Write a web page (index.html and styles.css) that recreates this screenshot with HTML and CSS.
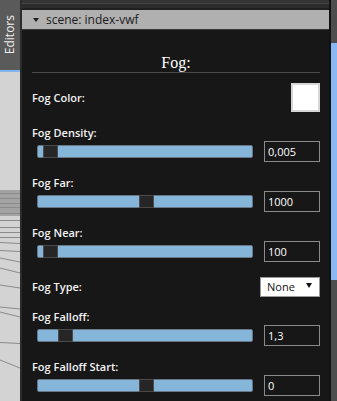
FILE: index.html
```html
<!DOCTYPE html>
<html lang="en">
  <head>
    <meta charset="UTF-8" />
    <meta name="viewport" content="width=device-width, initial-scale=1.0" />
    <title>Scene Editor - Fog</title>
    <link rel="stylesheet" href="styles.css">
  </head>
  <body>
    <div class="app">
      <aside class="side">
        <div class="side-tab"><span>Editors</span></div>
        <div class="scene">
          <svg width="20" height="329" viewBox="0 0 20 329">
            <rect x="0" y="118" width="20" height="26" fill="#a3a3a3" />
            <g stroke="#8a8a8a" stroke-width="1">
              <line x1="0" y1="121.5" x2="20" y2="121.5" />
              <line x1="0" y1="126.5" x2="20" y2="126.5" />
              <line x1="0" y1="131.5" x2="20" y2="131.5" />
              <line x1="0" y1="135.5" x2="20" y2="135.5" />
              <line x1="0" y1="141.5" x2="20" y2="141.5" />
              <line x1="0" y1="148.5" x2="20" y2="148.5" />
              <line x1="0" y1="155.5" x2="20" y2="155.5" />
              <line x1="0" y1="160.5" x2="20" y2="160.5" />
              <line x1="0" y1="165.5" x2="20" y2="165.5" />
              <line x1="0" y1="170.5" x2="20" y2="171.5" />
              <line x1="0" y1="178.5" x2="20" y2="179.5" />
              <line x1="0" y1="186" x2="20" y2="190" />
              <line x1="0" y1="196" x2="20" y2="201" />
              <line x1="0" y1="213" x2="20" y2="216" />
              <line x1="0" y1="235" x2="20" y2="237" />
              <line x1="0" y1="240" x2="20" y2="245" />
              <line x1="0" y1="270.5" x2="20" y2="271.5" />
              <line x1="0" y1="288" x2="20" y2="296" />
            </g>
          </svg>
        </div>
      </aside>

      <main class="panel">
        <div class="topbar"></div>
        <div class="header"><span class="caret"></span>scene: index-vwf</div>

        <div class="content">
          <h2 class="title">Fog:</h2>

          <div class="field inline">
            <label>Fog Color:</label>
            <div class="swatch"></div>
          </div>

          <div class="field">
            <label>Fog Density:</label>
            <div class="control">
              <div class="track"><div class="thumb" style="left: 2.3%"></div></div>
              <div class="value">0,005</div>
            </div>
          </div>

          <div class="field">
            <label>Fog Far:</label>
            <div class="control">
              <div class="track"><div class="thumb" style="left: 47.2%"></div></div>
              <div class="value">1000</div>
            </div>
          </div>

          <div class="field">
            <label>Fog Near:</label>
            <div class="control">
              <div class="track"><div class="thumb" style="left: 2.3%"></div></div>
              <div class="value">100</div>
            </div>
          </div>

          <div class="field inline type-row">
            <label>Fog Type:</label>
            <div class="select">None<span class="arrow"></span></div>
          </div>

          <div class="field">
            <label>Fog Falloff:</label>
            <div class="control">
              <div class="track"><div class="thumb" style="left: 9.3%"></div></div>
              <div class="value">1,3</div>
            </div>
          </div>

          <div class="field">
            <label>Fog Falloff Start:</label>
            <div class="control">
              <div class="track"><div class="thumb" style="left: 47.2%"></div></div>
              <div class="value">0</div>
            </div>
          </div>
        </div>
      </main>

      <div class="scrollbar"><div class="scroll-thumb"></div></div>
    </div>
  </body>
</html>
```

FILE: styles.css
```css
body {
  margin: 0;
  font-family: "Open Sans", Arial, sans-serif;
  background-color: #1b1b1b;
  overflow: hidden;
}

.app {
  display: flex;
  height: 401px;
  overflow: hidden;
}

/* Left editors strip */
.side {
  width: 20px;
  flex-shrink: 0;
  display: flex;
  flex-direction: column;
  border-right: 2px solid #2b2b2b;
}

.side-tab {
  height: 70px;
  flex-shrink: 0;
  background-color: #5a5a5a;
  border-bottom: 2px solid #84b4ef;
  display: flex;
  align-items: center;
  justify-content: center;
}

.side-tab span {
  writing-mode: vertical-rl;
  transform: rotate(180deg);
  font-size: 12px;
  line-height: 14px;
  color: #eeeeee;
}

.scene {
  flex: 1;
  min-height: 0;
  background-color: #d3d3d3;
}

.scene svg {
  display: block;
}

/* Main panel */
.panel {
  flex: 1;
  display: flex;
  flex-direction: column;
  min-height: 0;
  border-right: 2px solid #111;
}

.topbar {
  height: 10px;
  flex-shrink: 0;
  background: linear-gradient(#353535 0 3px, #454545 3px 4px, #2c2c2c 4px 8px, #1f1f1f 8px);
}

.header {
  height: 19px;
  flex-shrink: 0;
  background-color: #b0b0b0;
  border-bottom: 1px solid #3a3a3a;
  display: flex;
  align-items: center;
  padding-left: 11px;
  font-size: 12px;
  color: #1b1b1b;
}

.caret {
  width: 0;
  height: 0;
  border-left: 3px solid transparent;
  border-right: 3px solid transparent;
  border-top: 4px solid #1e1e1e;
  margin-right: 7px;
}

.content {
  flex: 1 0 auto;
  padding: 24px 9px 0 10px;
  background-color: #1e1e1e;
  background-image:
    radial-gradient(circle, #171717 55%, transparent 62%),
    radial-gradient(circle, #171717 55%, transparent 62%);
  background-size: 8px 14px;
  background-position: 0 0, 4px 7px;
}

.title {
  margin: 0 0 10px;
  font-family: "Liberation Serif", serif;
  font-size: 16px;
  font-weight: normal;
  line-height: 18px;
  color: #ffffff;
  text-align: center;
  border-bottom: 1px solid #4a4a4a;
}

.field {
  margin-bottom: 13px;
}

.field label {
  display: block;
  font-size: 11px;
  font-weight: 600;
  line-height: 15px;
  color: #f2f2f2;
}

.inline {
  display: flex;
  align-items: center;
  justify-content: space-between;
}

.swatch {
  width: 29px;
  height: 29px;
  box-sizing: border-box;
  background-color: #ffffff;
  border: 2px solid #d6d6d6;
}

.control {
  display: flex;
  align-items: center;
  height: 21px;
  margin-top: 1px;
}

.track {
  position: relative;
  width: 216px;
  height: 13px;
  margin-left: 5px;
  box-sizing: border-box;
  background-color: #85b5d9;
  border: 1px solid #667788;
  border-radius: 2px;
}

.thumb {
  position: absolute;
  top: -1px;
  bottom: -1px;
  width: 15px;
  box-sizing: border-box;
  background-color: #262626;
  border: 1px solid #4a4a4a;
}

.value {
  margin-left: auto;
  width: 56px;
  height: 21px;
  box-sizing: border-box;
  border: 1px solid #8a8a8a;
  padding-left: 3px;
  font-size: 11px;
  line-height: 19px;
  color: #ffffff;
}

.type-row {
  height: 23px;
  margin-bottom: 11px;
}

.select {
  width: 60px;
  height: 20px;
  box-sizing: border-box;
  display: flex;
  align-items: center;
  justify-content: space-between;
  padding: 0 7px 0 6px;
  background-color: #ffffff;
  border: 1px solid #999;
  font-size: 11px;
  color: #111;
}

.arrow {
  width: 0;
  height: 0;
  border-left: 3px solid transparent;
  border-right: 3px solid transparent;
  border-top: 5px solid #111;
  margin-top: -3px;
}

/* Scrollbar */
.scrollbar {
  width: 6px;
  flex-shrink: 0;
  background-color: #4d4d4d;
}

.scroll-thumb {
  margin-top: 43px;
  height: 237px;
  background-color: #8ab8f2;
}
```
